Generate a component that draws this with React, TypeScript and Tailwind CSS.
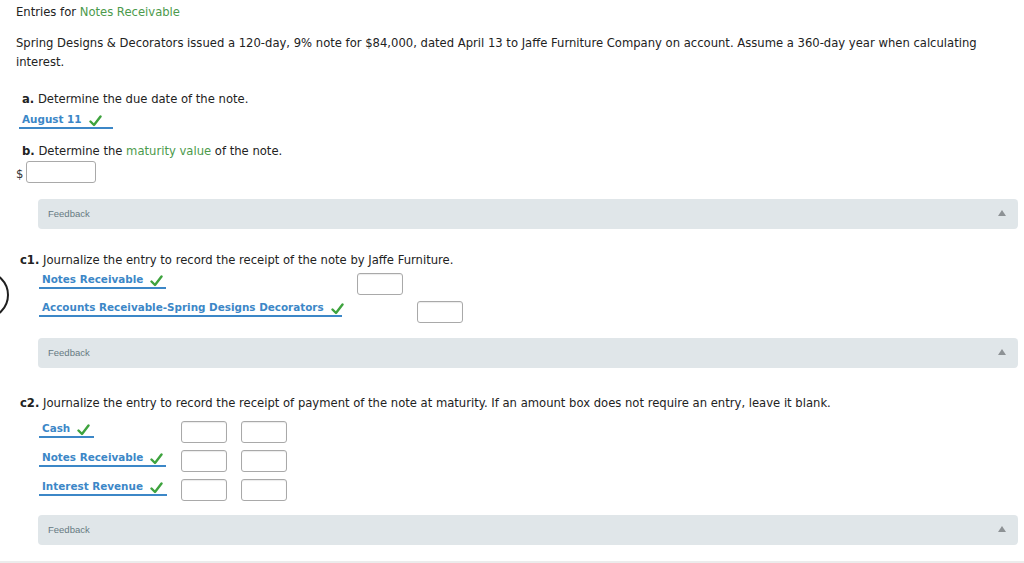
import React from 'react';

const BLUE = 'text-[#3c87c7]';

function Check() {
  return (
    <svg width="13" height="12" viewBox="0 0 13 12" className="inline-block ml-[7px] -mb-[2px]">
      <path d="M1.5 6.5 L5 10 L11.5 1.5" fill="none" stroke="#3ea33e" strokeWidth="2.4" strokeLinecap="round" strokeLinejoin="round" />
    </svg>
  );
}

function Answer({ children, width }: { children: React.ReactNode; width?: string }) {
  return (
    <div className={`inline-block whitespace-nowrap border-b-2 border-[#3c87c7] pl-[3px] leading-[16px] ${width ?? ''}`}>
      <span className={`font-bold ${BLUE} text-[10.4px]`}>{children}</span>
      <Check />
    </div>
  );
}

function Box() {
  return <div className="w-[46px] h-[22px] bg-white border border-[#a9a9a9] rounded-[3px] shadow-[inset_0_1px_1px_rgba(0,0,0,0.08)]" />;
}

function Feedback({ className }: { className?: string }) {
  return (
    <div className={`ml-[22px] h-[30px] rounded-[4px] bg-[#e0e6e9] flex items-center justify-between pl-[10px] pr-[12px] ${className ?? ''}`}>
      <span className="text-[9.5px] text-[#667a82]" style={{ fontFamily: '"Liberation Sans", Arial, sans-serif' }}>
        Feedback
      </span>
      <svg width="8" height="6" viewBox="0 0 8 6" className="-mt-[2px]">
        <path d="M4 0 L8 6 L0 6 Z" fill="#8d9295" />
      </svg>
    </div>
  );
}

export default function App() {
  return (
    <div
      className="relative w-[1024px] h-[563px] overflow-hidden bg-white text-[#222] text-[11.6px] leading-[18px]"
      style={{ fontFamily: '"DejaVu Sans", Verdana, sans-serif' }}
    >
      {/* stray cursor ring on the left edge */}
      <svg width="12" height="50" viewBox="0 0 12 50" className="absolute left-0 top-[272px]">
        <circle cx="-15" cy="23" r="23" fill="none" stroke="#1f1f1f" strokeWidth="2" />
      </svg>

      <div className="pl-[16px] pr-[6px]">
        <div className="pt-[3px]">
          Entries for <span className="text-[#4c9a4c]">Notes Receivable</span>
        </div>

        <p className="mt-[13px] leading-[19px]">
          Spring Designs &amp; Decorators issued a 120-day, 9% note for $84,000, dated April 13 to Jaffe Furniture Company on account. Assume a 360-day year when calculating interest.
        </p>

        <div className="mt-[18px] pl-[6px]">
          <b>a.</b> Determine the due date of the note.
        </div>
        <div className="mt-[2px] pl-[3px]">
          <Answer width="w-[94px]">August 11</Answer>
        </div>

        <div className="mt-[13px] pl-[6px]">
          <b>b.</b> Determine the <span className="text-[#4c9a4c]">maturity value</span> of the note.
        </div>
        <div className="mt-[1px] flex items-center">
          <span className="text-[#333] w-[10px] mt-[4px]">$</span>
          <div className="w-[70px] h-[22px] bg-white border border-[#a9a9a9] rounded-[3px]" />
        </div>

        <Feedback className="mt-[16px]" />

        <div className="mt-[22px] pl-[4px]">
          <b>c1.</b> Journalize the entry to record the receipt of the note by Jaffe Furniture.
        </div>
        <div className="mt-[1px] pl-[23px]">
          <div className="flex items-start h-[28px]">
            <div className="w-[318px]">
              <Answer width="w-[127px]">Notes Receivable</Answer>
            </div>
            <div className="mt-[3px]">
              <Box />
            </div>
          </div>
          <div className="flex items-start h-[28px]">
            <div className="w-[378px]">
              <Answer width="w-[303px]">Accounts Receivable-Spring Designs Decorators</Answer>
            </div>
            <div className="mt-[3px]">
              <Box />
            </div>
          </div>
        </div>

        <Feedback className="mt-[12px]" />

        <div className="mt-[26px] pl-[4px]">
          <b>c2.</b> Journalize the entry to record the receipt of payment of the note at maturity. If an amount box does not require an entry, leave it blank.
        </div>
        <div className="mt-[7px] pl-[23px]">
          {[
            { label: 'Cash', w: 'w-[55px]' },
            { label: 'Notes Receivable', w: 'w-[127px]' },
            { label: 'Interest Revenue', w: 'w-[128px]' },
          ].map((row) => (
            <div key={row.label} className="flex items-start h-[29px]">
              <div className="w-[142px]">
                <Answer width={row.w}>{row.label}</Answer>
              </div>
              <div className="mt-[2px] flex gap-[14px]">
                <Box />
                <Box />
              </div>
            </div>
          ))}
        </div>

        <Feedback className="mt-[9px]" />
      </div>

      <div className="mt-[16px] h-[3px] bg-[#ececec]" />
    </div>
  );
}
